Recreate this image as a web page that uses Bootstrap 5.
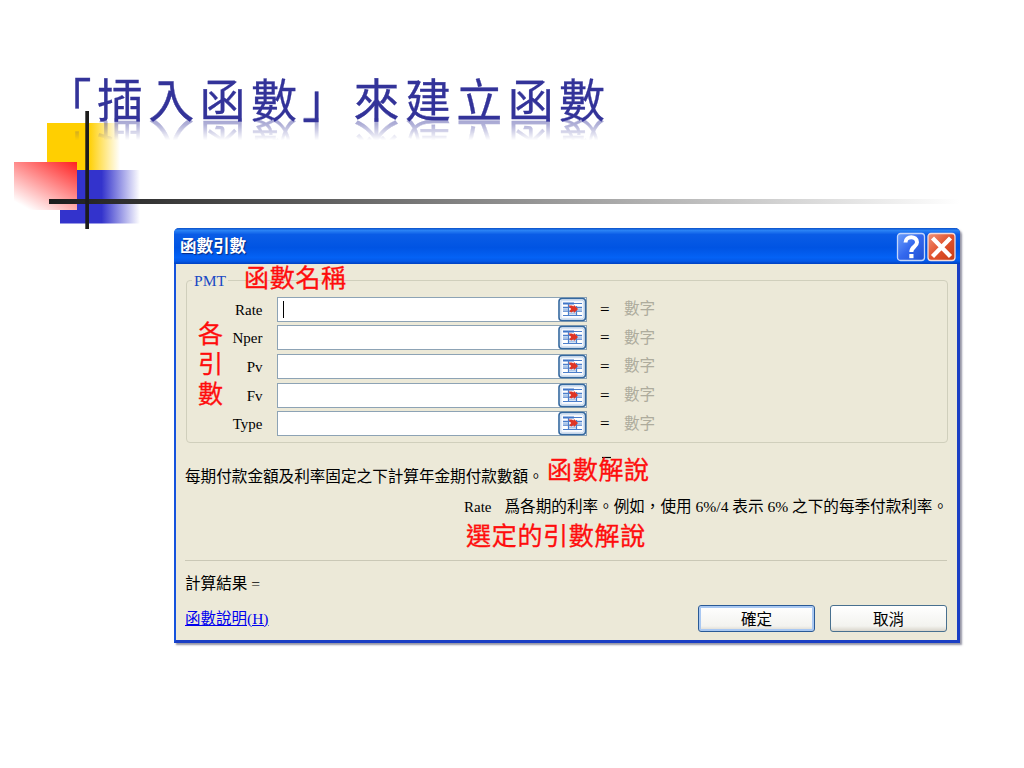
<!DOCTYPE html>
<html lang="zh-Hant">
<head>
    <meta charset="UTF-8">
    <meta name="viewport" content="width=device-width, initial-scale=1.0">
    <title>「插入函數」來建立函數</title>
    <link href="https://cdn.jsdelivr.net/npm/bootstrap@5.3.0/dist/css/bootstrap.min.css" rel="stylesheet">
    <script src="https://cdn.jsdelivr.net/npm/bootstrap@5.3.0/dist/js/bootstrap.bundle.min.js"></script>
    <style>
        body {
            width: 1024px;
            height: 768px;
            background-color: #fff;
            color: #000;
            font-family: "Liberation Serif", "Noto Sans CJK TC", serif;
            font-size: 15.6px;
            line-height: 20px;
        }
        .slide-head {
            height: 228px;
            padding: 63px 0 0 45.5px;
        }
        .slide-head svg {
            top: 0;
            left: 0;
        }
        .slide-title {
            font-family: "Noto Sans CJK TC", sans-serif;
            font-size: 46px;
            font-weight: 400;
            line-height: 68px;
            height: 68px;
            letter-spacing: 5.35px;
            color: #333399;
            -webkit-text-stroke: .3px #333399;
            -webkit-box-reflect: below -22px linear-gradient(transparent 54%, rgba(0, 0, 0, .4) 78%, rgba(0, 0, 0, .45) 88%, transparent 89%);
        }
        .xp-dialog {
            width: 786px;
            height: 415px;
            margin-left: 174px;
            background-color: #ece9d8;
            border: solid #1b3fc4;
            border-width: 0 3px 3px 2px;
            border-left-color: #1553dd;
            border-radius: 5px 5px 0 0;
            box-shadow: 2px 2px 2px rgba(60, 60, 90, .55);
        }
        .xp-titlebar {
            height: 36px;
            margin: 0 -3px 0 -2px;
            padding: 1px 4px 0 6px;
            border-radius: 5px 5px 0 0;
            background: linear-gradient(#0a50c8 0, #2a82f5 7%, #0a5ce6 18%, #0054e3 55%, #0462f5 82%, #0459e8 92%, #0040c0 100%);
        }
        .xp-titlebar span {
            color: #fff;
            font-weight: 700;
            font-size: 16.5px;
            text-shadow: 1px 1px 1px #0a2a80;
        }
        .arg-group {
            width: 762px;
            height: 163px;
            margin: 16px 0 0 10px;
            padding: 15.500px 0 0;
            border: 1px solid #d0cfbc;
            border-radius: 4px;
        }
        .group-name {
            top: -10px;
            left: 5px;
            padding: 0 2px;
            background-color: #ece9d8;
            color: #1948c4;
        }
        .arg-row {
            height: 25px;
            margin-bottom: 3.7px;
        }
        .arg-name {
            width: 75.5px;
            padding-top: 1px;
            text-align: right;
            font-size: 15px;
        }
        .arg-input {
            width: 310px;
            height: 25px;
            margin-left: 14.5px;
            background-color: #fff;
            border: 1px solid #8da3b5;
        }
        .arg-input svg {
            margin-right: -1px;
        }
        .caret {
            width: 1px;
            height: 17px;
            margin-left: 5px;
            background-color: #000;
        }
        .arg-eq {
            margin-left: 13px;
            width: 24px;
            font-size: 17px;
            padding-top: 1px;
        }
        .arg-type {
            color: #aeac9d;
        }
        .func-desc {
            margin: 24px 0 0 9px;
            white-space: nowrap;
        }
        .arg-desc {
            margin: 10px 0 0 288px;
            white-space: nowrap;
        }
        .arg-desc span {
            margin-right: 13px;
            font-size: 15px;
        }
        .result-line {
            width: 762px;
            margin: 43px 0 0 9px;
            padding-top: 13px;
            border-top: 1px solid #cac8b6;
        }
        .foot-row {
            width: 762px;
            margin: 11px 0 0 9px;
        }
        .foot-row a {
            color: #0000ee;
            font-size: 15.5px;
        }
        .xp-btn {
            width: 117px;
            height: 27px;
            padding: 0;
            border: 1px solid #48708f;
            border-radius: 3px;
            background: linear-gradient(#fff, #f3f3ef 80%, #d9d5cb);
            color: #000;
            line-height: 27px;
            text-align: center;
        }
        .xp-btn-ok {
            margin-right: 15px;
            border-color: #2a5a96;
            box-shadow: inset 0 0 0 2px #a9c8f2;
        }
        .red-note {
            color: #ff0d0d;
            font-family: "Noto Sans CJK TC", sans-serif;
            font-size: 25px;
            line-height: 30px;
            letter-spacing: .7px;
            white-space: nowrap;
            -webkit-text-stroke: .3px #ff0d0d;
        }
        .note-name { left: 68px; top: 33px; }
        .note-args { left: 22px; top: 89px; width: 26px; white-space: normal; }
        .note-func { left: 371px; top: 225px; }
        .note-arg { left: 290px; top: 291px; }
        .stray-eq { left: 425px; top: 219px; }
    </style>
</head>
<body>
    <svg class="d-none">
        <symbol id="pick" viewBox="0 0 29 25">
            <rect x="1" y="1.5" width="26.5" height="22" rx="3" fill="#f4f7fc" stroke="#34689f" stroke-width="1.6"/>
            <rect x="2.8" y="3.2" width="23" height="18.6" rx="2" fill="none" stroke="#c5d8ef" stroke-width="1"/>
            <rect x="4.500" y="5.500" width="19.500" height="14" fill="#fff"/>
            <path d="M5 6.500h11" stroke="#3f74c8" stroke-width="2"/>
            <path d="M16 6.500h8M5 10.300h19M5 14.200h19M5 18.500h19M10.500 6v13M18.500 9v10" stroke="#4b7ecb" stroke-width="1.2"/>
            <path d="M5 12.200h5M19 12.200h5M11 16.500h7" stroke="#a9c5ea" stroke-width="2"/>
            <path d="M10.500 8.500h3.500l1.500 1 .5-1.500 4 4-4 4-.5-2-2 1.500-2-1 1.500-2.500z" fill="#df3525"/>
        </symbol>
    </svg>

    <header class="slide-head position-relative">
        <svg class="position-absolute" width="1024" height="235">
            <defs>
                <linearGradient id="yellow"><stop offset="0" stop-color="#ffcf01"/><stop offset=".57" stop-color="#ffcf01"/><stop offset="1" stop-color="#fff"/></linearGradient>
                <linearGradient id="blue"><stop offset="0" stop-color="#3333cc"/><stop offset=".52" stop-color="#3333cc"/><stop offset="1" stop-color="#fff"/></linearGradient>
                <linearGradient id="red" x1="1" y1="0" x2=".25" y2="1"><stop offset="0" stop-color="#ff2020"/><stop offset="1" stop-color="#fff"/></linearGradient>
                <linearGradient id="rule"><stop offset="0" stop-color="#1c1c1c"/><stop offset="1" stop-color="#fff"/></linearGradient>
            </defs>
            <rect x="47" y="123" width="73" height="47" fill="url(#yellow)"/>
            <rect x="60" y="170" width="80" height="53.500" fill="url(#blue)"/>
            <rect x="14" y="162" width="63" height="48" fill="url(#red)"/>
            <rect x="49" y="199" width="911" height="5" fill="url(#rule)"/>
            <rect x="85.300" y="111" width="3.700" height="118" fill="#1c1c1c"/>
        </svg>
        <h1 class="slide-title position-relative m-0 text-nowrap">「插入函數」來建立函數</h1>
    </header>

    <div class="xp-dialog position-relative">
        <div class="xp-titlebar d-flex align-items-center">
            <span>函數引數</span>
            <svg class="ms-auto" width="60" height="30">
                <defs>
                    <linearGradient id="help" x2="1" y2="1"><stop offset="0" stop-color="#6ca0fb"/><stop offset=".5" stop-color="#3468ee"/><stop offset="1" stop-color="#2050d0"/></linearGradient>
                    <linearGradient id="close" x2="1" y2="1"><stop offset="0" stop-color="#f0957b"/><stop offset=".5" stop-color="#e2522d"/><stop offset="1" stop-color="#c63c15"/></linearGradient>
                </defs>
                <rect x="1.500" y="1.500" width="27" height="27" rx="3" fill="url(#help)" stroke="#c4d6fa" stroke-width="1.300"/>
                <rect x="32" y="1.500" width="27" height="27" rx="3" fill="url(#close)" stroke="#f6dcd8" stroke-width="1.300"/>
                <path d="M9.500 10.500C9.500 3.500 21 3.500 21 10.200C21 14.800 15.300 14.500 15.300 20" fill="none" stroke="#fff" stroke-width="4"/>
                <rect x="13.300" y="22" width="4.200" height="4.200" fill="#fff"/>
                <path d="M36.500 6L54.500 24.500M54.500 6L36.500 24.500" stroke="#fff" stroke-width="4.300"/>
            </svg>
        </div>

        <div class="arg-group position-relative">
            <span class="group-name position-absolute">PMT</span>
            <div class="arg-row d-flex align-items-center">
                <span class="arg-name">Rate</span>
                <div class="arg-input d-flex align-items-center"><div class="caret"></div><svg class="ms-auto" width="29" height="25"><use href="#pick"/></svg></div>
                <span class="arg-eq">=</span>
                <span class="arg-type">數字</span>
            </div>
            <div class="arg-row d-flex align-items-center">
                <span class="arg-name">Nper</span>
                <div class="arg-input d-flex align-items-center"><svg class="ms-auto" width="29" height="25"><use href="#pick"/></svg></div>
                <span class="arg-eq">=</span>
                <span class="arg-type">數字</span>
            </div>
            <div class="arg-row d-flex align-items-center">
                <span class="arg-name">Pv</span>
                <div class="arg-input d-flex align-items-center"><svg class="ms-auto" width="29" height="25"><use href="#pick"/></svg></div>
                <span class="arg-eq">=</span>
                <span class="arg-type">數字</span>
            </div>
            <div class="arg-row d-flex align-items-center">
                <span class="arg-name">Fv</span>
                <div class="arg-input d-flex align-items-center"><svg class="ms-auto" width="29" height="25"><use href="#pick"/></svg></div>
                <span class="arg-eq">=</span>
                <span class="arg-type">數字</span>
            </div>
            <div class="arg-row d-flex align-items-center">
                <span class="arg-name">Type</span>
                <div class="arg-input d-flex align-items-center"><svg class="ms-auto" width="29" height="25"><use href="#pick"/></svg></div>
                <span class="arg-eq">=</span>
                <span class="arg-type">數字</span>
            </div>
        </div>

        <div class="func-desc">每期付款金額及利率固定之下計算年金期付款數額。</div>
        <div class="arg-desc"><span>Rate</span>爲各期的利率。例如，使用 6%/4 表示 6% 之下的每季付款利率。</div>
        <div class="result-line">計算結果 =</div>
        <div class="foot-row d-flex align-items-center">
            <a href="#">函數說明(H)</a>
            <button type="button" class="xp-btn xp-btn-ok ms-auto">確定</button>
            <button type="button" class="xp-btn">取消</button>
        </div>

        <svg class="stray-eq position-absolute" width="10" height="14"><path d="M1 10.500h9" stroke="#000" stroke-width="1.200"/></svg>
        <div class="red-note note-name position-absolute">函數名稱</div>
        <div class="red-note note-args position-absolute">各引數</div>
        <div class="red-note note-func position-absolute">函數解說</div>
        <div class="red-note note-arg position-absolute">選定的引數解說</div>
    </div>
</body>
</html>
